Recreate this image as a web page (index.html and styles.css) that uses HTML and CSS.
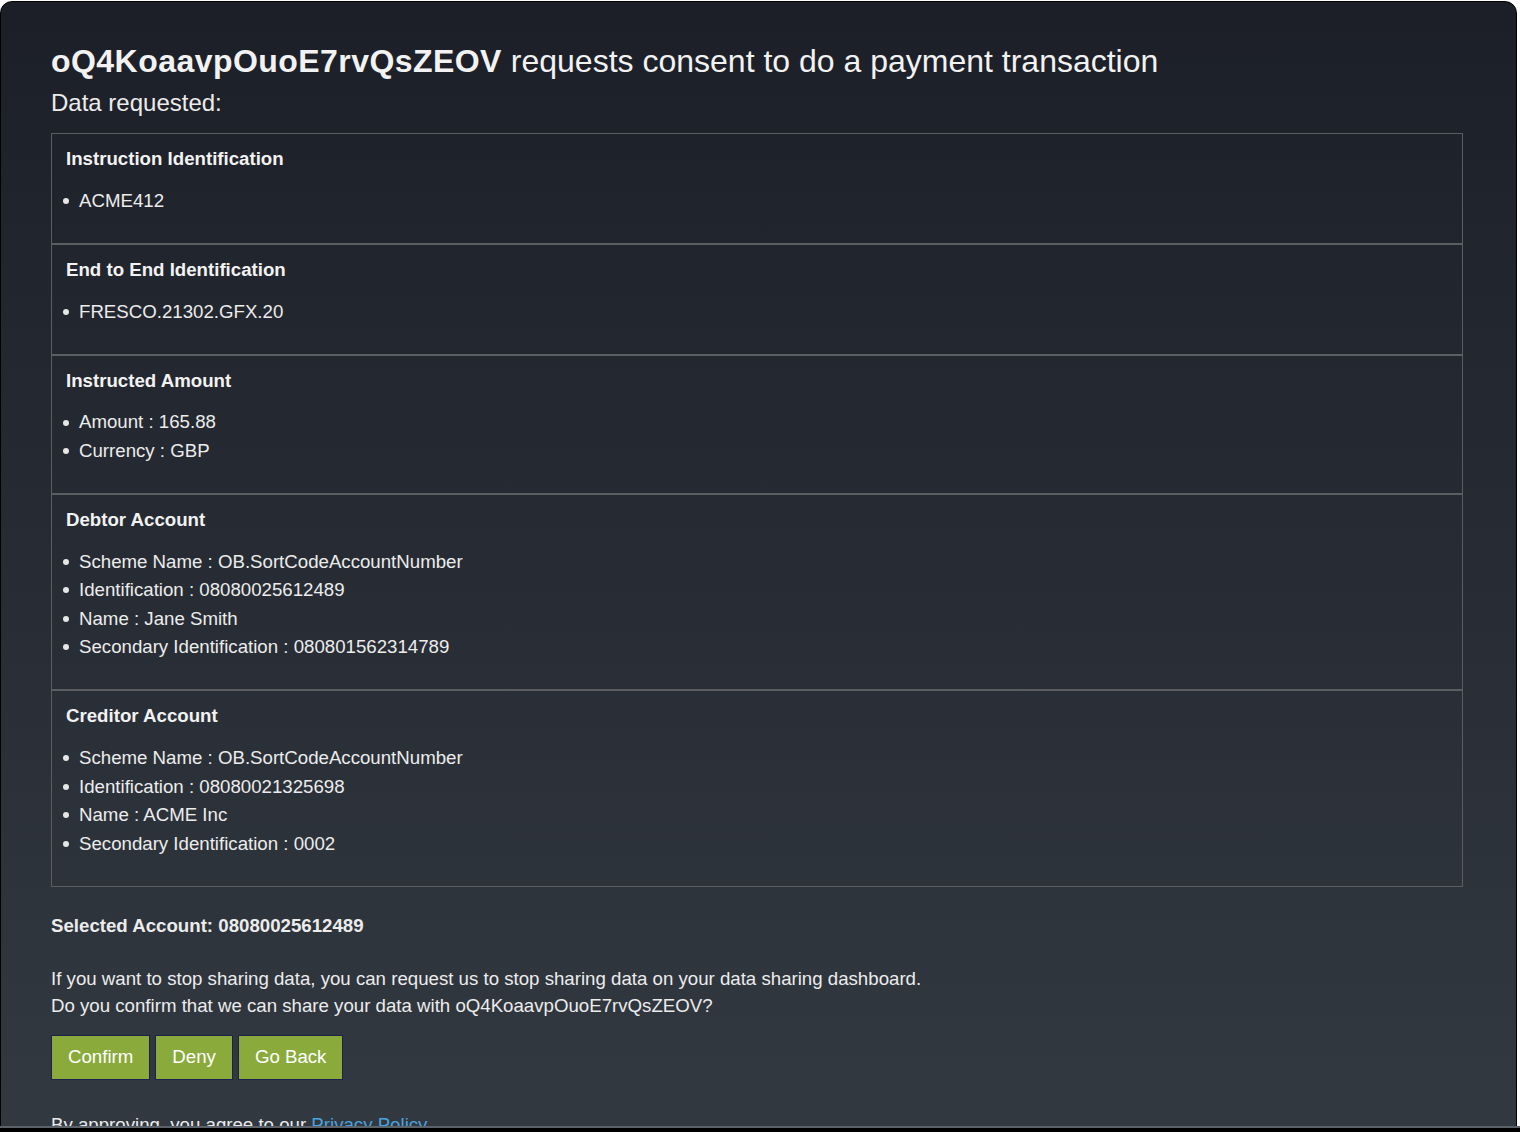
FILE: index.html
```html
<!DOCTYPE html>
<html lang="en">
<head>
  <meta charset="UTF-8">
  <title>Payment Consent</title>
  <link rel="stylesheet" href="styles.css">
</head>
<body>

  <div class="page">
    <h1><strong>oQ4KoaavpOuoE7rvQsZEOV</strong> <span class="title-rest">requests consent to do a payment transaction</span></h1>
    <h2 class="subtitle">Data requested:</h2>

    <div class="data-box">
      <div class="data-section">
        <h4>Instruction Identification</h4>
        <ul>
          <li>ACME412</li>
        </ul>
      </div>
      <div class="data-section">
        <h4>End to End Identification</h4>
        <ul>
          <li>FRESCO.21302.GFX.20</li>
        </ul>
      </div>
      <div class="data-section">
        <h4>Instructed Amount</h4>
        <ul>
          <li>Amount : 165.88</li>
          <li>Currency : GBP</li>
        </ul>
      </div>
      <div class="data-section">
        <h4>Debtor Account</h4>
        <ul>
          <li>Scheme Name : OB.SortCodeAccountNumber</li>
          <li>Identification : 08080025612489</li>
          <li>Name : Jane Smith</li>
          <li>Secondary Identification : 080801562314789</li>
        </ul>
      </div>
      <div class="data-section">
        <h4>Creditor Account</h4>
        <ul>
          <li>Scheme Name : OB.SortCodeAccountNumber</li>
          <li>Identification : 08080021325698</li>
          <li>Name : ACME Inc</li>
          <li>Secondary Identification : 0002</li>
        </ul>
      </div>
    </div>

    <p class="selected">Selected Account: 08080025612489</p>

    <p class="info">
      If you want to stop sharing data, you can request us to stop sharing data on your data sharing dashboard.<br>
      Do you confirm that we can share your data with oQ4KoaavpOuoE7rvQsZEOV?
    </p>

    <div class="actions">
      <button class="btn">Confirm</button>
      <button class="btn">Deny</button>
      <button class="btn">Go Back</button>
    </div>

    <p class="legal">By approving, you agree to our <a href="#">Privacy Policy</a></p>
  </div>

  <div class="bottom-edge"></div>

</body>
</html>
```

FILE: styles.css
```css
* {
  box-sizing: border-box;
}

html, body {
  margin: 0;
  height: 100%;
  overflow: hidden;
  background: #fff;
}

body {
  font-family: "Liberation Sans", Arial, sans-serif;
}

.page {
  margin-top: 1px;
  width: 1517px;
  min-height: 1200px;
  border: 1px solid #000;
  border-radius: 12px 12px 0 0;
  background: linear-gradient(180deg, #1c1f27 0, #323941 1130px);
  padding: 40px 53px 0 50px;
  color: #ececec;
}

h1 {
  margin: 0;
  font-size: 32px;
  line-height: 38px;
  font-weight: normal;
  color: #f2f2f2;
}
h1 strong {
  font-weight: bold;
  letter-spacing: 0.45px;
}

.subtitle {
  margin: 9px 0 0;
  font-size: 24px;
  line-height: 28px;
  font-weight: normal;
}

.data-box {
  margin-top: 16px;
}
.data-section {
  border: 1px solid #5a5d62;
  padding: 14px 14px 0;
}
.data-section h4 {
  margin: 0;
  font-size: 18.67px;
  line-height: 22px;
  font-weight: bold;
  color: #f2f2f2;
}
.data-section ul {
  margin: 16.67px 0 27.7px;
  padding: 0;
  list-style: none;
}
.data-section li {
  display: flex;
  align-items: center;
  font-size: 18.67px;
  line-height: 28.5px;
}
.data-section li::before {
  content: "";
  width: 6px;
  height: 6px;
  border-radius: 50%;
  background: #e6e6e6;
  margin: 0 10px 0 -3px;
  flex-shrink: 0;
}

.selected {
  margin: 25px 0 0;
  font-size: 18.67px;
  line-height: 28px;
  font-weight: bold;
}

.info {
  margin: 25px 0 0;
  font-size: 18.67px;
  line-height: 27.5px;
}

.actions {
  display: flex;
  gap: 5px;
  margin-top: 15px;
}
.btn {
  font-family: "Liberation Sans", Arial, sans-serif;
  font-size: 18.67px;
  line-height: 23px;
  padding: 9px 16px 11px;
  color: #fff;
  background-color: #8aab3b;
  border: 1px solid #1c2150;
  border-radius: 0;
  cursor: pointer;
}

.legal {
  margin: 31px 0 0;
  font-size: 18.67px;
  line-height: 28px;
}
.legal a {
  color: #4aa3df;
  text-decoration: none;
}

.bottom-edge {
  position: fixed;
  left: 0;
  right: 0;
  bottom: 0;
  height: 6px;
  border-top: 2px solid #5b626a;
  background: #000;
}
```
